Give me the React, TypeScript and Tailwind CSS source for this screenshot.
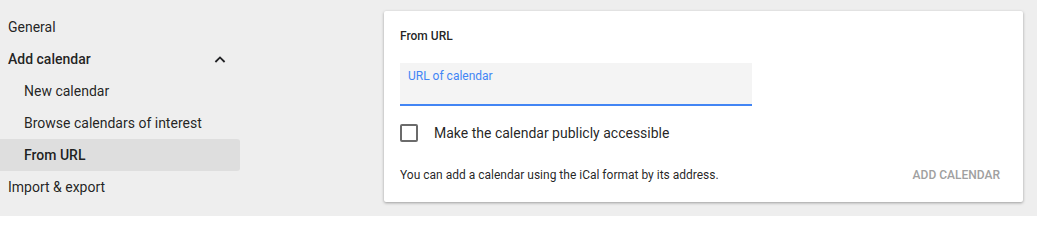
const subItems = ['New calendar', 'Browse calendars of interest', 'From URL'];

const ChevronUp = () => (
  <svg width="12" height="8" viewBox="0 0 12 8" className="text-[#202124]">
    <path d="M1.4 7 6 2.4 10.6 7" fill="none" stroke="currentColor" strokeWidth="1.8" />
  </svg>
);

export default function App() {
  return (
    <div
      className="flex h-[216px] w-[1037px] bg-[#eeeeee] text-[rgba(0,0,0,0.87)]"
      style={{ fontFamily: 'Roboto, Arial, sans-serif' }}
    >
      {/* settings menu */}
      <nav className="w-[240px] pt-[11px] text-[14px]">
        <div className="flex h-8 items-center pl-2">General</div>
        <div className="flex h-8 items-center justify-between pl-2 pr-[14px] font-medium">
          <span>Add calendar</span>
          <ChevronUp />
        </div>
        {subItems.map((item) => (
          <div
            key={item}
            className={
              item === 'From URL'
                ? 'flex h-8 items-center rounded-r-[3px] bg-[#dedede] pl-6 font-medium'
                : 'flex h-8 items-center pl-6'
            }
          >
            {item}
          </div>
        ))}
        <div className="flex h-8 items-center pl-2">Import &amp; export</div>
      </nav>

      {/* form card */}
      <div className="ml-[144px] mt-[11px] flex h-[191px] w-[639px] flex-col rounded-[2px] bg-white px-4 pt-[17px] shadow-[0_1px_3px_rgba(0,0,0,0.35)]">
        <div className="text-[12px] font-medium leading-4">From URL</div>

        <div className="mt-[19px] h-[43px] w-[352px] border-b-2 border-[#4285f4] bg-[#f4f4f4] px-2 pt-[5px]">
          <span className="block text-[12px] leading-4 text-[#4285f4]">URL of calendar</span>
        </div>

        <label className="mt-[17px] flex items-center gap-4">
          <span className="h-[18px] w-[18px] rounded-[2px] border-2 border-[#6b6b6b]" />
          <span className="text-[14px] leading-5">Make the calendar publicly accessible</span>
        </label>

        <div className="mt-[24px] flex items-center justify-between">
          <span className="text-[12px] leading-4">You can add a calendar using the iCal format by its address.</span>
          <button className="mr-[7px] text-[12px] font-medium leading-4 text-[#a0a0a0]">ADD CALENDAR</button>
        </div>
      </div>
    </div>
  );
}
